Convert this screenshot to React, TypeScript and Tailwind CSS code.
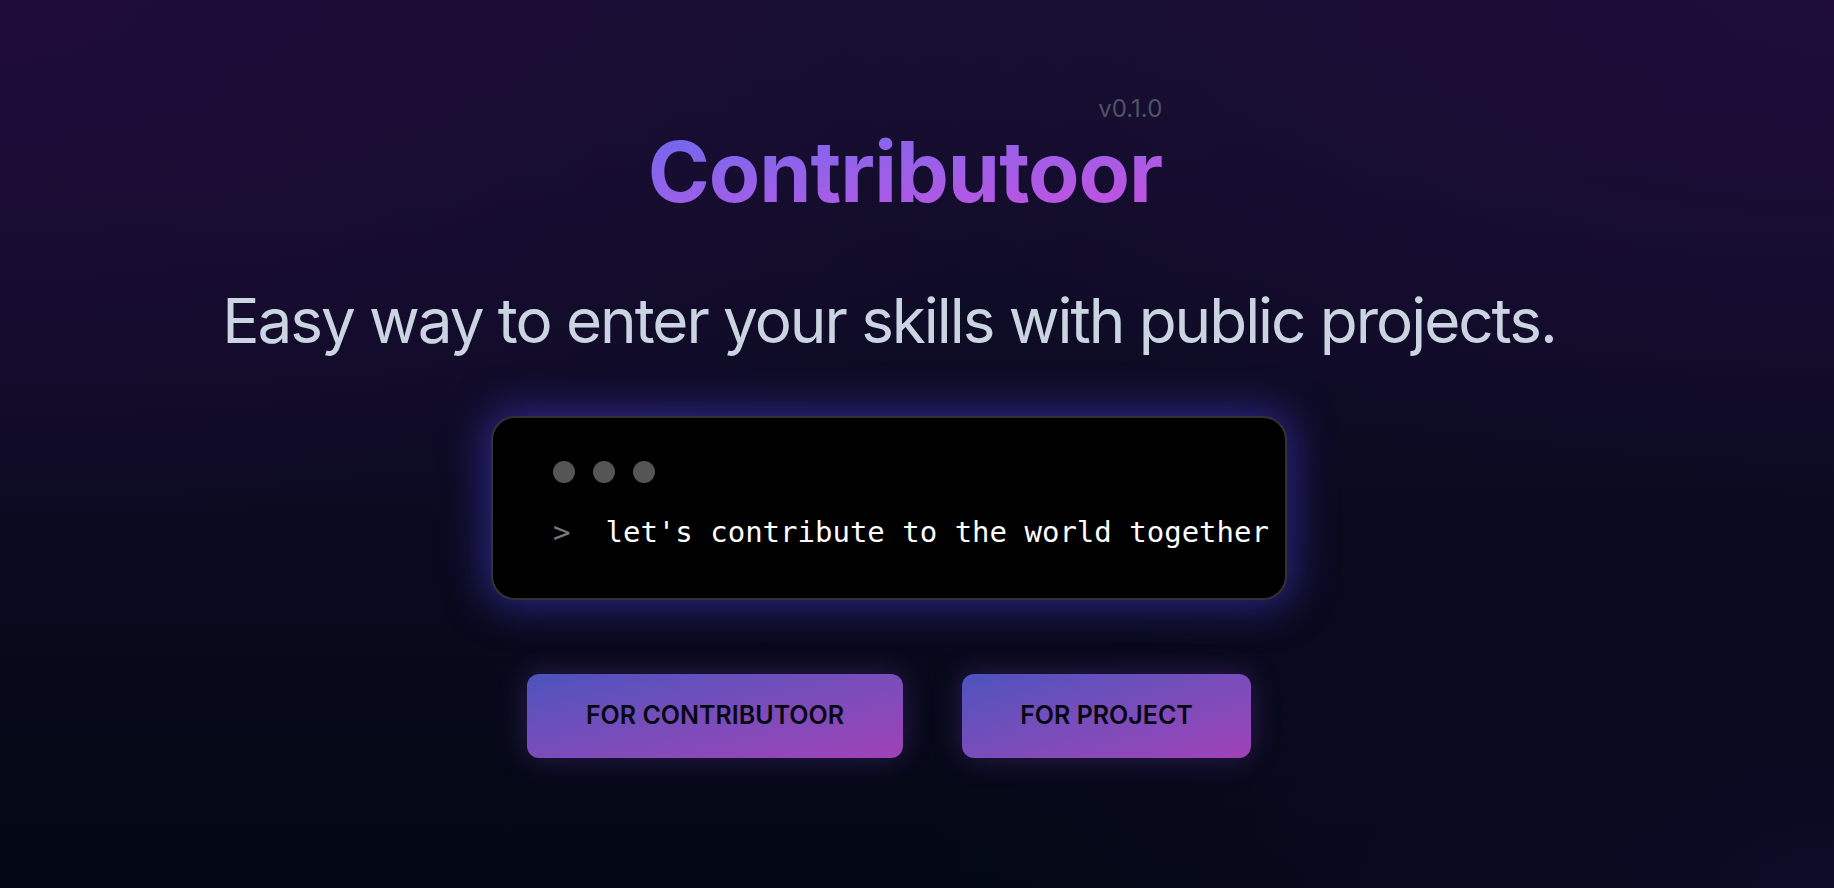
export default function App() {
  return (
    <div className="min-h-screen w-full flex flex-col items-center pr-[56px] pt-[97px] font-['Inter',sans-serif] bg-[radial-gradient(ellipse_at_top_left,#200c3a_0%,transparent_45%),radial-gradient(ellipse_at_top_right,#1f0c3a_0%,transparent_40%),radial-gradient(ellipse_at_bottom_right,#0e0b26_0%,transparent_35%),linear-gradient(to_bottom,#150e30,#030814)]">
      {/* title */}
      <div className="flex flex-col items-end ml-[32px]">
        <span className="text-[24px] leading-none text-[#4b5563]">v0.1.0</span>
        <h1 className="mt-[9px] text-[84px] leading-none font-bold tracking-[-0.012em] bg-linear-to-br from-[#6c68ef] to-[#c74ee0] bg-clip-text text-transparent">
          Contributoor
        </h1>
      </div>

      <p className="mt-[76px] text-[62px] leading-none tracking-[-0.033em] text-[#cbd5e1]">
        Easy way to enter your skills with public projects.
      </p>

      {/* terminal */}
      <div className="mt-[64px] w-[796px] h-[184px] rounded-3xl border-2 border-[#333] bg-black pl-[60px] pt-[43px] shadow-[0_0_40px_6px_rgba(67,56,202,0.6)]">
        <div className="flex gap-[18px]">
          <span className="w-[22px] h-[22px] rounded-full bg-[#555]" />
          <span className="w-[22px] h-[22px] rounded-full bg-[#555]" />
          <span className="w-[22px] h-[22px] rounded-full bg-[#555]" />
        </div>
        <div className="mt-[29px] flex items-baseline font-['DejaVu_Sans_Mono',monospace] text-[29px] leading-[1.4]">
          <span className="text-[#7a7a7a]">&gt;</span>
          <span className="ml-[35px] text-white">let's contribute to the world together</span>
        </div>
      </div>

      {/* actions */}
      <div className="mt-[74px] flex gap-[59px]">
        <button className="w-[376px] h-[84px] rounded-xl bg-linear-to-br from-[#4c52bd] to-[#9f41b7] text-[25px] font-semibold text-[#080812] shadow-[0_0_30px_rgba(147,76,220,0.28)]">
          FOR CONTRIBUTOOR
        </button>
        <button className="w-[289px] h-[84px] rounded-xl bg-linear-to-br from-[#4c52bd] to-[#9f41b7] text-[25px] font-semibold text-[#080812] shadow-[0_0_30px_rgba(147,76,220,0.28)]">
          FOR PROJECT
        </button>
      </div>
    </div>
  );
}
